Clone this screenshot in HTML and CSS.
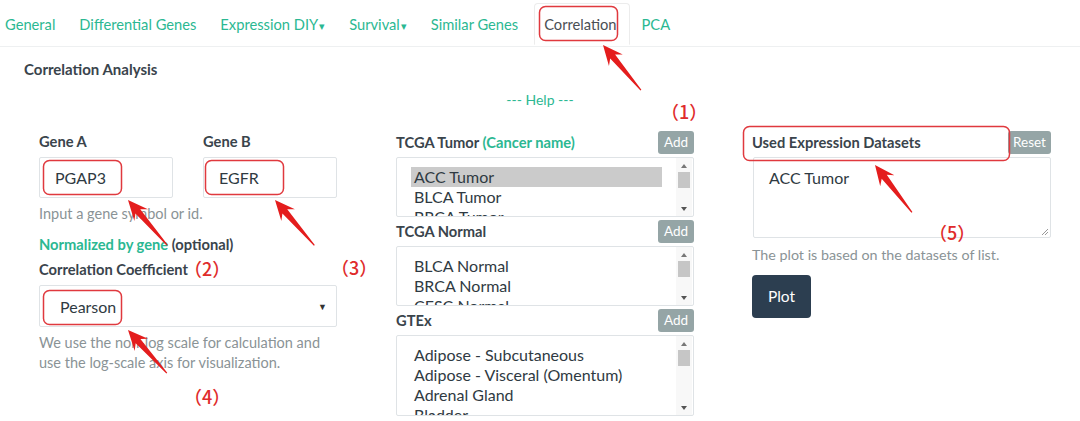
FILE: index.html
```html
<!DOCTYPE html>
<html>
<head>
<meta charset="utf-8">
<link rel="stylesheet" href="styles.css">
</head>
<body>
<ul class="nav">
  <li><a href="#">General</a></li>
  <li><a href="#">Differential Genes</a></li>
  <li><a href="#">Expression DIY<span class="caret">▾</span></a></li>
  <li><a href="#">Survival<span class="caret">▾</span></a></li>
  <li><a href="#">Similar Genes</a></li>
  <li class="active"><a href="#">Correlation</a></li>
  <li><a href="#">PCA</a></li>
</ul>

<div class="page-title">Correlation Analysis</div>
<div class="help-link"><a href="#">--- Help ---</a></div>

<div class="grid">
  <div class="col">
    <div class="gene-row">
      <div class="gene">
        <div class="label">Gene A</div>
        <div class="input">PGAP3</div>
      </div>
      <div class="gene">
        <div class="label">Gene B</div>
        <div class="input">EGFR</div>
      </div>
    </div>
    <div class="help first-help">Input a gene symbol or id.</div>
    <div class="norm"><a href="#">Normalized by gene</a> (optional)</div>
    <div class="label coef-label">Correlation Coefficient</div>
    <div class="select"><span>Pearson</span><span class="sel-caret">▼</span></div>
    <div class="help select-help">We use the non-log scale for calculation and use the log-scale axis for visualization.</div>
  </div>

  <div class="col">
    <div class="block">
      <div class="head"><span class="label">TCGA Tumor <a href="#" class="cn">(Cancer name)</a></span><span class="btn-add">Add</span></div>
      <div class="list">
        <div class="items">
          <div class="item sel">ACC Tumor</div>
          <div class="item">BLCA Tumor</div>
          <div class="item">BRCA Tumor</div>
        </div>
        <div class="sb"><span class="up"></span><span class="thumb"></span><span class="down"></span></div>
      </div>
    </div>
    <div class="block">
      <div class="head"><span class="label">TCGA Normal</span><span class="btn-add">Add</span></div>
      <div class="list">
        <div class="items">
          <div class="item">BLCA Normal</div>
          <div class="item">BRCA Normal</div>
          <div class="item">CESC Normal</div>
        </div>
        <div class="sb"><span class="up"></span><span class="thumb"></span><span class="down"></span></div>
      </div>
    </div>
    <div class="block">
      <div class="head"><span class="label">GTEx</span><span class="btn-add">Add</span></div>
      <div class="list tall">
        <div class="items">
          <div class="item">Adipose - Subcutaneous</div>
          <div class="item">Adipose - Visceral (Omentum)</div>
          <div class="item">Adrenal Gland</div>
          <div class="item">Bladder</div>
        </div>
        <div class="sb"><span class="up"></span><span class="thumb"></span><span class="down"></span></div>
      </div>
    </div>
  </div>

  <div class="col right">
    <div class="head"><span class="label">Used Expression Datasets</span><span class="btn-add reset">Reset</span></div>
    <div class="textarea">ACC Tumor
      <svg class="grip" width="9" height="9" viewBox="0 0 9 9"><path d="M8 2 L2 8 M8 5 L5 8" stroke="#999" stroke-width="1"/></svg>
    </div>
    <div class="help plot-help">The plot is based on the datasets of list.</div>
    <div class="btn-plot">Plot</div>
  </div>
</div>

<svg class="annot" width="1080" height="421" viewBox="0 0 1080 421">
  <g fill="none" stroke="#e0393e" stroke-width="1.5">
    <rect x="539.5" y="6.5" width="78" height="34" rx="6"/>
    <rect x="43.5" y="160.5" width="78" height="34" rx="6"/>
    <rect x="205.5" y="160.5" width="78" height="34" rx="6"/>
    <rect x="43.5" y="290.5" width="78" height="34" rx="6"/>
    <rect x="743.5" y="126.5" width="266" height="34" rx="6"/>
  </g>
  <g fill="#e41d1d">
    <polygon transform="translate(603,45) rotate(-40)" points="0,0 9,20 3.2,15 0.6,59 -0.6,59 -3.2,15 -9,20"/>
    <polygon transform="translate(128,200) rotate(-41)" points="0,0 9,20 3.2,15 0.6,60 -0.6,60 -3.2,15 -9,20"/>
    <polygon transform="translate(275,200) rotate(-41)" points="0,0 9,20 3.2,15 0.6,60 -0.6,60 -3.2,15 -9,20"/>
    <polygon transform="translate(128,330) rotate(-42)" points="0,0 9,20 3.2,15 0.6,58 -0.6,58 -3.2,15 -9,20"/>
    <polygon transform="translate(875,165) rotate(-38)" points="0,0 9,20 3.2,15 0.6,60 -0.6,60 -3.2,15 -9,20"/>
  </g>
</svg>
<span class="num n1">（1）</span>
<span class="num n2">（2）</span>
<span class="num n3">（3）</span>
<span class="num n4">（4）</span>
<span class="num n5">（5）</span>
</body>
</html>
```

FILE: styles.css
```css
* { box-sizing: border-box; }
html, body { margin: 0; padding: 0; }
body {
  position: relative;
  width: 1080px;
  height: 421px;
  overflow: hidden;
  background: #fff;
  font-family: Lato, "Noto Sans", sans-serif;
  font-size: 15px;
  color: #34404a;
}
a { color: #2bb892; text-decoration: none; }

.nav {
  display: flex;
  list-style: none;
  margin: 0 0 0 -7px;
  padding: 3px 0 0 0;
  border-bottom: 1px solid #eef0f1;
}
.nav li { margin-bottom: -1px; }
.nav a {
  display: block;
  padding: 10px 11px;
  line-height: 20px;
  font-size: 14.7px;
  border: 1px solid transparent;
  border-radius: 4px 4px 0 0;
}
.nav .active { margin-left: 4px; }
.nav .active a {
  color: #4a4f54;
  padding: 10px 12px 10px 9px;
  border-color: #ececec;
  border-bottom-color: #fff;
  background: #fff;
}
.caret { font-size: 11px; margin-left: 1px; }

.page-title {
  margin: 12px 0 0 24px;
  font-weight: 700;
  line-height: 20px;
  color: #3a444c;
}
.help-link {
  margin-top: 11px;
  text-align: center;
  line-height: 20px;
  font-size: 14px;
}

.grid {
  display: grid;
  grid-template-columns: 298px 298px 298px;
  column-gap: 59px;
  padding-left: 39px;
  margin-top: 21px;
}
.col { display: flex; flex-direction: column; }

.label {
  font-weight: 700;
  font-size: 14.7px;
  line-height: 21px;
  color: #3a444c;
}
.gene-row { display: flex; gap: 30px; }
.gene { width: 134px; }
.gene .label { height: 23px; margin-bottom: 3px; }
.input {
  height: 41px;
  border: 1px solid #dfe3e6;
  border-radius: 2px;
  padding: 0 15px;
  line-height: 39px;
  font-size: 16px;
  color: #2f3a42;
}
.help { color: #8a9396; line-height: 20px; font-size: 14.5px; }
.first-help { margin-top: 6px; }
.norm {
  margin-top: 10px;
  line-height: 20px;
  font-weight: 700;
  font-size: 14.7px;
  color: #3a444c;
}
.coef-label { margin-top: 5px; line-height: 20px; }
.select {
  margin-top: 6px;
  height: 42px;
  border: 1px solid #dfe3e6;
  border-radius: 2px;
  padding: 0 9px 0 20px;
  display: flex;
  align-items: center;
  justify-content: space-between;
  font-size: 16px;
  color: #2f3a42;
}
.sel-caret { font-size: 9px; color: #333; }
.select-help { margin-top: 6px; }

.block + .block { margin-top: 3px; }
.head {
  display: flex;
  justify-content: space-between;
  align-items: center;
  height: 23px;
  margin-bottom: 3px;
}
.cn { font-weight: 700; }
.btn-add {
  width: 36px;
  height: 23px;
  line-height: 23px;
  text-align: center;
  background: #95a5a6;
  color: #fff;
  font-size: 13.5px;
  border-radius: 3px;
}
.btn-add.reset { width: 43px; }

.list {
  display: flex;
  height: 60px;
  border: 1px solid #dfe3e6;
  border-radius: 2px;
  overflow: hidden;
}
.list.tall { height: 81px; }
.items {
  flex: 1;
  padding: 9px 14px 0 14px;
  overflow: hidden;
}
.item {
  height: 20px;
  line-height: 20px;
  padding: 0 3px;
  font-size: 16px;
  color: #2f3a42;
  white-space: nowrap;
}
.item.sel { background: #cbcbcb; }
.sb {
  width: 16px;
  margin-right: 1px;
  display: flex;
  flex-direction: column;
  align-items: center;
  padding: 6px 0 5px;
  background: #f8f8f8;
}
.up, .down {
  width: 0; height: 0;
  border-left: 3.5px solid transparent;
  border-right: 3.5px solid transparent;
}
.up { border-bottom: 4px solid #777; }
.down { border-top: 4px solid #555; margin-top: auto; }
.thumb {
  margin-top: 4px;
  width: 12px;
  height: 16px;
  background: #c6c6c6;
}

.right .label { margin-left: -1px; }
.textarea {
  position: relative;
  height: 81px;
  border: 1px solid #dfe3e6;
  border-radius: 2px;
  padding: 10px 15px;
  line-height: 20px;
  font-size: 16px;
  color: #2f3a42;
}
.grip { position: absolute; right: 1px; bottom: 1px; }
.plot-help { margin-top: 7px; margin-left: -1px; font-size: 14.3px; }
.btn-plot {
  margin-top: 10px;
  margin-left: -1px;
  width: 59px;
  height: 43px;
  line-height: 43px;
  text-align: center;
  background: #2c3e50;
  color: #fff;
  font-size: 15.5px;
  border-radius: 4px;
}

.annot { position: absolute; left: 0; top: 0; pointer-events: none; }
.num {
  position: absolute;
  font-family: "Noto Sans CJK SC", "Noto Sans", sans-serif;
  font-size: 18px;
  font-weight: 500;
  line-height: 20px;
  color: #e02b2b;
  white-space: nowrap;
}
.n1 { left: 661px; top: 101px; }
.n2 { left: 184px; top: 258px; }
.n3 { left: 331px; top: 257px; }
.n4 { left: 184px; top: 386px; }
.n5 { left: 929px; top: 222px; }
```
